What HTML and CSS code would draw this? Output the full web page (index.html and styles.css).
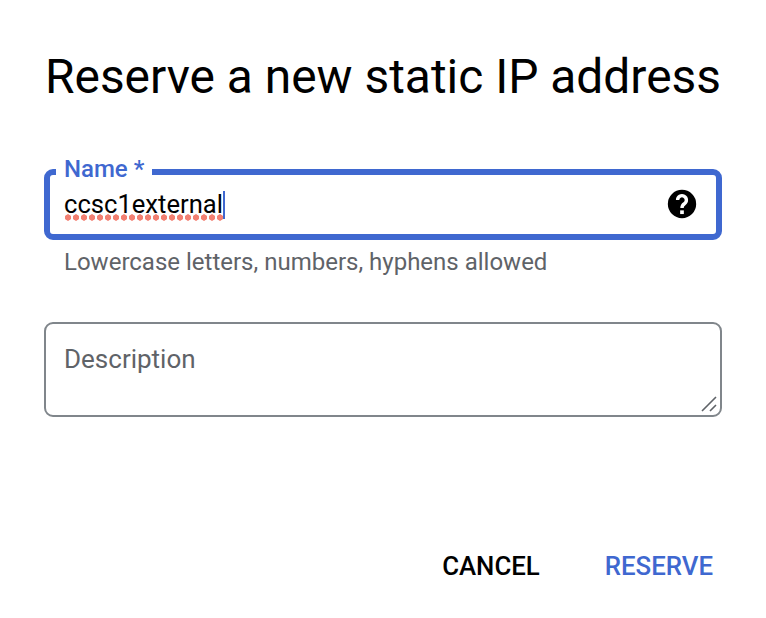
FILE: index.html
```html
<!DOCTYPE html>
<html lang="en">
<head>
    <meta charset="UTF-8">
    <meta name="viewport" content="width=device-width, initial-scale=1.0">
    <title>Reserve a new static IP address</title>
    <link rel="stylesheet" href="styles.css">
</head>
<body>
    <div class="dialog">
        <h1 class="title">Reserve a new static IP address</h1>

        <div class="field field-focused">
            <label class="field-label">Name *</label>
            <span class="field-value"><span class="misspelled">ccsc1external</span><span class="caret"></span></span>
            <svg class="help-icon" viewBox="0 0 24 24" width="34" height="34">
                <circle cx="12" cy="12" r="10"/>
                <path class="help-mark" d="M8.9 9.2a3.1 3.1 0 1 1 4.8 2.6c-1.1.7-1.7 1.3-1.7 3"/>
                <rect class="help-dot" x="10.7" y="16.5" width="2.6" height="2.6"/>
            </svg>
        </div>
        <p class="field-hint">Lowercase letters, numbers, hyphens allowed</p>

        <div class="field field-textarea">
            <span class="placeholder">Description</span>
            <svg class="resize-grip" viewBox="0 0 16 16" width="16" height="16">
                <path d="M1 15 L15 1 M9 15 L15 9"/>
            </svg>
        </div>

        <div class="actions">
            <button class="btn">CANCEL</button>
            <button class="btn btn-primary">RESERVE</button>
        </div>
    </div>
</body>
</html>
```

FILE: styles.css
```css
html, body {
    margin: 0;
    padding: 0;
    background-color: #fff;
}
body {
    font-family: Roboto, "Liberation Sans", sans-serif;
    height: 618px;
    overflow: hidden;
}
.dialog {
    padding: 47px 44px 0 44px;
}
.title {
    margin: 0 0 0 1px;
    font-size: 47.9px;
    line-height: 60px;
    font-weight: 400;
    color: #000;
    white-space: nowrap;
}
.field {
    position: relative;
    box-sizing: border-box;
    display: flex;
    align-items: center;
    justify-content: space-between;
    border-radius: 9px;
}
.field-focused {
    margin-top: 62px;
    height: 71px;
    border: 6px solid #3f68d0;
    padding: 0 17px 0 14px;
}
.field-label {
    position: absolute;
    top: -20px;
    left: 6px;
    padding: 0 8px;
    background-color: #fff;
    color: #3f68d0;
    font-size: 24px;
    line-height: 28px;
    font-weight: 500;
}
.field-value {
    display: flex;
    align-items: center;
    font-size: 25.6px;
    line-height: 30px;
    color: #000;
}
.misspelled {
    padding-bottom: 2px;
    background-image: radial-gradient(circle, #f28072 2.9px, transparent 3.4px);
    background-size: 8px 7px;
    background-repeat: repeat-x;
    background-position: left bottom;
}
.caret {
    width: 2px;
    height: 28px;
    background-color: #3f68d0;
}
.help-icon {
    margin-bottom: 1px;
    fill: #000;
}
.help-mark {
    fill: none;
    stroke: #fff;
    stroke-width: 2.4;
}
.help-dot {
    fill: #fff;
}
.field-hint {
    margin: 8px 0 0 20px;
    font-size: 24px;
    line-height: 28px;
    color: #5f6368;
}
.field-textarea {
    margin-top: 46px;
    height: 95px;
    border: 2px solid #80868b;
    padding: 0 18px 0 18px;
    align-items: flex-start;
}
.placeholder {
    margin-top: 19px;
    font-size: 26px;
    line-height: 32px;
    color: #5f6368;
}
.resize-grip {
    position: absolute;
    right: 3px;
    bottom: 3px;
    fill: none;
    stroke: #5f6368;
    stroke-width: 1.6;
}
.actions {
    display: flex;
    justify-content: flex-end;
    gap: 65px;
    margin-top: 133px;
    padding-right: 9px;
}
.btn {
    border: none;
    background: none;
    padding: 0;
    font-family: inherit;
    font-size: 25.8px;
    line-height: 32px;
    font-weight: 500;
    color: #000;
}
.btn-primary {
    color: #3f68d0;
}
```
